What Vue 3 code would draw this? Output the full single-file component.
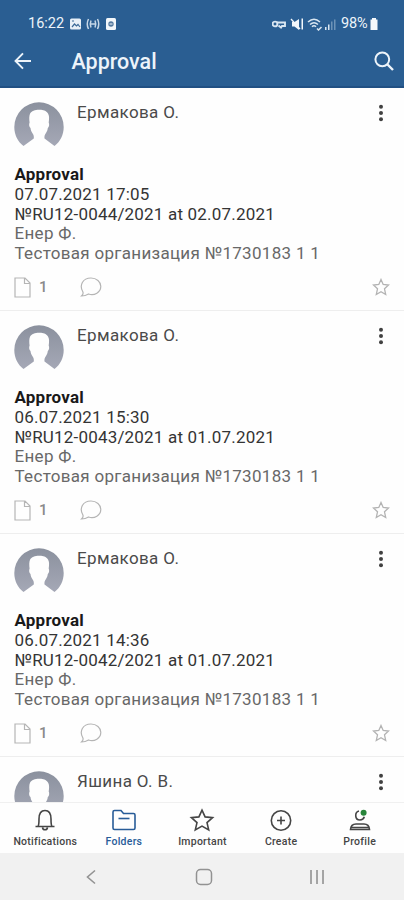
<script setup>
const cards = [
  { name: 'Ермакова О.', date: '07.07.2021 17:05', doc: '№RU12-0044/2021 at 02.07.2021' },
  { name: 'Ермакова О.', date: '06.07.2021 15:30', doc: '№RU12-0043/2021 at 01.07.2021' },
  { name: 'Ермакова О.', date: '06.07.2021 14:36', doc: '№RU12-0042/2021 at 01.07.2021' },
  { name: 'Яшина О. В.', date: '', doc: '' },
]
const tabs = ['Notifications', 'Folders', 'Important', 'Create', 'Profile']
</script>

<template>
  <div class="screen">
    <header class="top">
      <div class="status">
        <span class="clock">16:22</span>
        <svg class="left-icons" width="50" height="14" viewBox="0 0 50 14">
          <rect x="1" y="1.500" width="11" height="11" rx="1.500" fill="#e8f0f7" />
          <path d="M3 10l2.500-3 2 2 1.500-1.500 2 2.500M3 4h2" fill="none" stroke="#3e6b98" stroke-width="1.200" />
          <g fill="none" stroke="#c6d7e7" stroke-width="1.500">
            <path d="M19.500 2q-2.500 5 0 10M28.500 2q2.500 5 0 10M22 3.500q-1.500 3.500 0 7M26 3.500q1.500 3.500 0 7M22 7h4" />
          </g>
          <rect x="37" y="1" width="10" height="12" rx="1.500" fill="#f2f7fb" />
          <circle cx="42" cy="7" r="2.700" fill="#53799f" />
          <path d="M40.500 7h3" stroke="#f2f7fb" />
        </svg>
        <svg class="right-icons" width="66" height="14" viewBox="0 0 66 14">
          <g fill="none" stroke="#d9e6f1" stroke-width="1.900">
            <circle cx="3" cy="7" r="2.400" />
            <path d="M5 5.500h8v3.500h-3l-1 1.500L6.500 8.500" />
          </g>
          <path d="M20 5h2.500L27 2v11l-4.500-3.500H20zM29.500 1.500h1.500v11h-1.500z" fill="#f2f7fb" />
          <path d="M19 2l9 10" stroke="#f2f7fb" stroke-width="1.300" />
          <g fill="none" stroke="#d9e6f1" stroke-width="1.500">
            <path d="M36 5q6-5.500 12 0M38 7.500q4-3.500 8 0M40 9.700q2-2 4 0" />
            <path d="M45 11.500l1.500 1.500 3-3" />
          </g>
          <path d="M53 10h1.500v3H53zM56 7.500h1.500V13H56z" fill="#d9e6f1" />
          <path d="M59 4.500h1.500V13H59zM62 2.500h1.500V13H62z" fill="#6d93b7" />
        </svg>
        <span class="percent">98%</span>
        <svg width="10" height="14" viewBox="0 0 10 14"><path d="M3 1h4v1.500h1.500V13h-7V2.500H3z" fill="#f4f8fc" /></svg>
      </div>
      <div class="bar">
        <svg width="18" height="18" viewBox="0 0 18 18" fill="none" stroke="#edf4fa" stroke-width="1.900"><path d="M17 9H2M9 1.300L1.500 9 9 16.700" /></svg>
        <h1>Approval</h1>
        <svg width="20" height="20" viewBox="0 0 20 20" fill="none" stroke="#edf4fa" stroke-width="2"><circle cx="8.300" cy="8.300" r="6.900" /><path d="M13 13l6 6" stroke-width="2.400" /></svg>
      </div>
    </header>

    <main class="list">
      <article v-for="(c, i) in cards" :key="i" class="card">
        <div class="person">
          <svg width="50" height="50" viewBox="0 0 50 50">
            <defs>
              <linearGradient :id="'shade' + i" x1="0" y1="0" x2="0" y2="1">
                <stop offset="0" stop-color="#8b919e" />
                <stop offset="1" stop-color="#a5a8b6" />
              </linearGradient>
            </defs>
            <path :fill="'url(#shade' + i + ')'" d="M9.500 44C4 40 .3 33 .3 25a24.700 24.700 0 0 1 49.400 0c0 8-3.700 15-9.200 19L30.500 36.500c-.3-2 .2-4 1.500-5.500 1-1.500 1.500-3 1.800-5 1.300-.8 1.800-3.500.9-5.500.6-4 .6-7-.7-9-2-3.500-6-4-9-3.800-4 .2-7.500 1-9 4-1 2.500-.8 5.500-.4 8.800-.9 2-.4 4.700.9 5.500.3 2 .8 3.500 1.800 5 1.300 1.500 1.800 3.500 1.500 5.500z" />
          </svg>
          <span class="name">{{ c.name }}</span>
          <svg class="dots" width="6" height="18" viewBox="0 0 6 18" fill="#414141"><circle cx="3" cy="2.700" r="2" /><circle cx="3" cy="9" r="2" /><circle cx="3" cy="15.300" r="2" /></svg>
        </div>
        <template v-if="c.date">
          <div class="copy">
            <div class="title">Approval</div>
            <div class="date">{{ c.date }}</div>
            <div class="doc">{{ c.doc }}</div>
            <div class="who">Енер Ф.</div>
            <div class="org">Тестовая организация №1730183 1 1</div>
          </div>
          <div class="foot">
            <svg width="17" height="21" viewBox="0 0 17 21" fill="none" stroke="#b5b5b5" stroke-width="1.200"><path d="M1 1h10l5 5v14H1zM10.500 1v5.500H16" /></svg>
            <span class="count">1</span>
            <svg class="bubble" width="22" height="20" viewBox="0 0 22 20" fill="none" stroke="#b5b5b5" stroke-width="1.200"><path d="M1.500 19c1.700-1.500 2-3 1.200-4.500C-.8 8.500 2.500 1 11 1c5.500 0 9.800 3.700 9.800 8.300 0 6-6.300 9.700-12.300 7.700-2 1.300-4.500 2-7 2z" /></svg>
            <svg class="star" width="18" height="18" viewBox="0 0 18 18" fill="none" stroke="#b3b3b3" stroke-width="1.300"><path d="M9 1.500l2.200 5 5.300.5-4 3.800 1.200 5.700L9 13.700l-4.700 2.800 1.200-5.700L1.500 7l5.300-.5z" /></svg>
          </div>
        </template>
      </article>
    </main>

    <nav class="tabs">
      <div v-for="(t, i) in tabs" :key="t" class="tab" :class="{ active: i === 1 }">
        <svg width="26" height="24" viewBox="0 0 26 24" fill="none" stroke="currentColor" stroke-width="1.600">
          <path v-if="i === 0" d="M3.500 18.500h19M6 18.500c1-1.500 1-3 1-7.500 0-5 2-8.500 6-8.500s6 3.500 6 8.500c0 4.500 0 6 1 7.500M10.500 19.500c.5 3 4.500 3 5 0" />
          <g v-else-if="i === 1"><path d="M2 20V4q0-1.500 1.500-1.500H10l2.500 3h10Q24 5.500 24 7v13q0 1.500-1.500 1.500h-19Q2 21.500 2 20z" /><path d="M7.500 10.500h11" /></g>
          <path v-else-if="i === 2" d="M13 2.200l3.100 6.700 7.500.7-5.600 5 1.700 7.300-6.700-3.800-6.700 3.800L8 14.600l-5.600-5 7.500-.7z" />
          <g v-else-if="i === 3"><circle cx="13" cy="12.500" r="9.700" /><path d="M13 8.500v8M9 12.500h8" /></g>
          <g v-else><path d="M12 3c-4.500 1-4.500 9 1 9 2.300 0 3.700-1.300 4.300-3.200M3.500 21.500h19c-.3-3.700-2.500-5.500-5.500-5.500H9c-3 0-5.200 1.800-5.500 5.500zM4 19.500h18" /><circle cx="16.600" cy="4.800" r="3" fill="#28853a" stroke="none" /></g>
        </svg>
        <span>{{ t }}</span>
      </div>
    </nav>

    <div class="system">
      <svg width="10" height="16" viewBox="0 0 10 16" fill="none" stroke="#939393" stroke-width="1.600"><path d="M9 1.500L1.500 8 9 14.500" /></svg>
      <svg class="home" width="18" height="18" viewBox="0 0 18 18" fill="none" stroke="#929292" stroke-width="1.500"><rect x="1.500" y="1.500" width="15" height="15" rx="4" /></svg>
      <svg width="16" height="16" viewBox="0 0 16 16" stroke="#929292" stroke-width="1.600"><path d="M2 1v14M8 1v14M14 1v14" /></svg>
    </div>
  </div>
</template>

<style>
body { margin: 0; background: #fff; }
</style>

<style scoped>
.screen { width: 404px; height: 900px; display: flex; flex-direction: column; overflow: hidden; background: #fefefe; font-family: Roboto, sans-serif; }
svg { display: block; flex: none; }
.top { height: 88px; flex: none; box-sizing: border-box; background: #2a5e92; border-bottom: 2px solid #215083; color: #edf4fa; }
.status { height: 36px; box-sizing: border-box; padding: 11px 25px 0 28px; display: flex; align-items: center; font-size: 14.500px; }
.left-icons { margin-left: 5px; }
.right-icons { margin-left: auto; }
.percent { margin-left: 3px; width: 28px; letter-spacing: -.1px; }
.bar { height: 50px; box-sizing: border-box; padding: 0 10px 0 14px; display: flex; align-items: center; }
h1 { margin: 0 auto 0 39.500px; padding-top: 2px; font-size: 21.500px; line-height: 28px; font-weight: 500; }
.list { height: 714px; flex: none; overflow: hidden; border-bottom: 1px solid #f0f0f0; }
.card { height: 223px; box-sizing: border-box; border-bottom: 1px solid #eee; padding: 14px 14px 0; }
.person { height: 63px; display: flex; align-items: flex-start; }
.name { margin-left: 13px; font-size: 17px; line-height: 20px; letter-spacing: .36px; color: #4a4a4a; }
.dots { margin: 2px 6px 0 auto; }
.copy { font-size: 17px; line-height: 19.600px; color: #343434; white-space: nowrap; padding: .4px 0 0 .5px; }
.title { font-weight: 700; letter-spacing: .2px; color: #191919; }
.date, .doc { letter-spacing: .19px; }
.who, .org { letter-spacing: .3px; color: #686868; }
.foot { display: flex; align-items: center; height: 22px; margin-top: 13px; }
.count { width: 10px; margin-left: 8px; font-size: 15px; font-weight: 500; color: #8a8a8a; }
.bubble { margin-left: 31px; }
.star { margin-left: auto; }
.tabs { height: 50px; flex: none; display: flex; padding: 0 5px 0 6px; }
.tab { flex: 1; display: flex; flex-direction: column; align-items: center; padding-top: 5px; font-size: 10.500px; font-weight: 500; line-height: 14px; color: #454545; }
.tab span { margin-top: 3px; letter-spacing: .25px; }
.tab.active { color: #285c98; }
.system { height: 48px; flex: none; background: #f1f1f1; display: flex; align-items: center; justify-content: space-between; padding: 0 79px 0 86px; box-sizing: border-box; }
.home { margin-left: 2px; }
</style>
